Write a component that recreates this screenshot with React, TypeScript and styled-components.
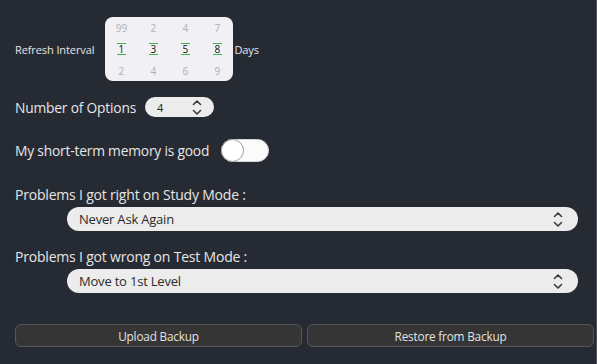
import React, { useState } from "react";
import styled, { createGlobalStyle } from "styled-components";

const GlobalStyle = createGlobalStyle`
  html, body {
    margin: 0;
    padding: 0;
    background: #262a33;
  }
  body {
    font-family: "Open Sans", "Noto Sans", sans-serif;
    color: #e6e6e6;
  }
`;

const Page = styled.div`
  width: 597px;
  height: 364px;
  box-sizing: border-box;
  padding: 17px 2px 0 15px;
  border-right: 1px solid #4f525a;
  display: flex;
  flex-direction: column;
`;

const Row = styled.div<{ $top?: number; $gap?: number }>`
  display: flex;
  align-items: center;
  margin-top: ${(p) => p.$top ?? 0}px;
  gap: ${(p) => p.$gap ?? 0}px;
`;

const SmallLabel = styled.span`
  font-size: 11px;
  letter-spacing: -0.1px;
`;

const Label = styled.span`
  font-size: 13.8px;
  letter-spacing: -0.2px;
`;

const Picker = styled.div`
  display: grid;
  grid-template-columns: repeat(4, 32px);
  height: 64px;
  background: #f1f0f5;
  border-radius: 8px;
  overflow: hidden;
`;

const Wheel = styled.div`
  display: grid;
  grid-template-rows: 21px 22px 21px;
  justify-items: center;
  align-items: center;
  font-size: 10px;
`;

const Faded = styled.span`
  color: #b0afb4;
`;

const Picked = styled.span`
  display: inline-block;
  min-width: 9px;
  height: 10px;
  line-height: 10px;
  text-align: center;
  color: #111;
  border-top: 1px solid #3fb449;
  border-bottom: 1px solid #3fb449;
`;

const Spin = styled.div`
  width: 69px;
  height: 20px;
  box-sizing: border-box;
  border-radius: 10px;
  background: #ececec;
  color: #222;
  font-size: 11px;
  display: flex;
  align-items: center;
  justify-content: space-between;
  padding: 0 12px 0 12px;
`;

const Toggle = styled.button<{ $on: boolean }>`
  position: relative;
  width: 48px;
  height: 23px;
  padding: 0;
  border: 1px solid #d6d6d6;
  border-radius: 12px;
  background: ${(p) => (p.$on ? "#3fb449" : "#fbfbfb")};
  cursor: pointer;

  &::after {
    content: "";
    position: absolute;
    top: -1px;
    left: ${(p) => (p.$on ? "24px" : "-1px")};
    width: 21px;
    height: 21px;
    border-radius: 50%;
    background: #ffffff;
    border: 1px solid #9b9b9b;
  }
`;

const Section = styled.div<{ $top: number }>`
  display: flex;
  flex-direction: column;
  margin-top: ${(p) => p.$top}px;
`;

const SectionLabel = styled.span`
  font-size: 14px;
  line-height: 16px;
  letter-spacing: -0.2px;
  margin-bottom: 4px;
`;

const Select = styled.div`
  height: 24px;
  box-sizing: border-box;
  margin: 0 16px 0 52px;
  border-radius: 12px;
  background: #ececec;
  color: #2a2a2a;
  font-size: 13px;
  letter-spacing: -0.2px;
  display: flex;
  align-items: center;
  justify-content: space-between;
  padding: 0 15px 0 12px;
`;

const Buttons = styled.div`
  display: grid;
  grid-template-columns: 1fr 1fr;
  gap: 5px;
  margin-top: 31px;
`;

const Button = styled.button`
  height: 23px;
  border: 1px solid #56575b;
  border-radius: 6px;
  background: #353535;
  color: #e2e2e2;
  font-family: "Open Sans", "Noto Sans", sans-serif;
  font-size: 11.8px;
  letter-spacing: -0.2px;
  cursor: pointer;
`;

const Chevrons = () => (
  <svg width="10" height="17" viewBox="0 0 10 17" fill="none" stroke="#3a3a3a" strokeWidth="1.6" strokeLinecap="round" strokeLinejoin="round">
    <path d="M1.5 5.5 L5 2 L8.5 5.5" />
    <path d="M1.5 11.5 L5 15 L8.5 11.5" />
  </svg>
);

const wheels = [
  ["99", "1", "2"],
  ["2", "3", "4"],
  ["4", "5", "6"],
  ["7", "8", "9"],
];

export default function App() {
  const [memory, setMemory] = useState(false);

  return (
    <>
      <GlobalStyle />
      <Page>
        <Row $gap={11}>
          <SmallLabel>Refresh Interval</SmallLabel>
          <Picker>
            {wheels.map(([prev, cur, next], i) => (
              <Wheel key={i}>
                <Faded>{prev}</Faded>
                <Picked>{cur}</Picked>
                <Faded>{next}</Faded>
              </Wheel>
            ))}
          </Picker>
          <SmallLabel style={{ marginLeft: -10 }}>Days</SmallLabel>
        </Row>

        <Row $top={16} $gap={9}>
          <Label>Number of Options</Label>
          <Spin>
            <span>4</span>
            <Chevrons />
          </Spin>
        </Row>

        <Row $top={22} $gap={12}>
          <Label>My short-term memory is good</Label>
          <Toggle $on={memory} onClick={() => setMemory(!memory)} />
        </Row>

        <Section $top={25}>
          <SectionLabel>Problems I got right on Study Mode :</SectionLabel>
          <Select>
            <span>Never Ask Again</span>
            <Chevrons />
          </Select>
        </Section>

        <Section $top={18}>
          <SectionLabel>Problems I got wrong on Test Mode :</SectionLabel>
          <Select>
            <span>Move to 1st Level</span>
            <Chevrons />
          </Select>
        </Section>

        <Buttons>
          <Button>Upload Backup</Button>
          <Button>Restore from Backup</Button>
        </Buttons>
      </Page>
    </>
  );
}
